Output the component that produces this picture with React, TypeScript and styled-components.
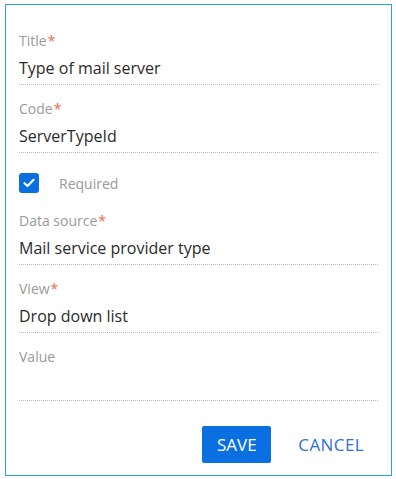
import styled, { createGlobalStyle } from "styled-components";

const GlobalStyle = createGlobalStyle`
  body {
    margin: 0;
    background: #ffffff;
    font-family: "Open Sans", "Noto Sans", sans-serif;
  }
`;

const SCard = styled.div`
  display: flex;
  flex-direction: column;
  margin: 4px 0 0 5px;
  width: 387px;
  height: 472px;
  box-sizing: border-box;
  padding: 25px 13px 0 13px;
  border: 1px solid #22a3dd;
  background: #ffffff;
`;

const SField = styled.div`
  display: flex;
  flex-direction: column;
  border-bottom: 1px dotted #b9b9b9;
  margin-bottom: 13px;
`;

const SLabel = styled.label`
  height: 22px;
  line-height: 22px;
  font-size: 14px;
  color: #9a9a9a;
`;

const SStar = styled.span`
  color: #f2684f;
  margin-left: 1px;
`;

const SValue = styled.div`
  box-sizing: border-box;
  height: 32px;
  padding-top: 2px;
  line-height: 28px;
  font-size: 16px;
  color: #2b2b2b;
  white-space: nowrap;
`;

const SCheckRow = styled.div`
  display: flex;
  align-items: center;
  gap: 20px;
  height: 20px;
  margin: 7px 0 17px;
`;

const SCheckbox = styled.span`
  display: flex;
  align-items: center;
  justify-content: center;
  width: 20px;
  height: 20px;
  border-radius: 3px;
  background: #0a6fe0;
`;

const SCheckText = styled.span`
  font-size: 14px;
  color: #9a9a9a;
`;

const SFooter = styled.div`
  display: flex;
  justify-content: flex-end;
  align-items: center;
  gap: 17px;
  margin-top: 12px;
  padding-right: 4px;
`;

const SSave = styled.button`
  width: 69px;
  height: 37px;
  padding: 0;
  border: none;
  border-radius: 2px;
  background: #0a6fe0;
  color: #ffffff;
  font-family: inherit;
  font-size: 17px;
  cursor: pointer;
`;

const SCancel = styled.button`
  height: 37px;
  padding: 0 10px;
  border: none;
  background: none;
  color: #2f6fd8;
  font-family: inherit;
  font-size: 17px;
  letter-spacing: 0.4px;
  cursor: pointer;
`;

type FieldProps = { label: string; value?: string; required?: boolean };

const Field = ({ label, value, required }: FieldProps) => (
  <SField>
    <SLabel>
      {label}
      {required && <SStar>*</SStar>}
    </SLabel>
    <SValue>{value}</SValue>
  </SField>
);

const App = () => {
  return (
    <>
      <GlobalStyle />
      <SCard>
        <Field label="Title" value="Type of mail server" required />
        <Field label="Code" value="ServerTypeId" required />
        <SCheckRow>
          <SCheckbox>
            <svg width="12" height="10" viewBox="0 0 12 10">
              <path
                d="M1.5 5.2 L4.5 8 L10.5 1.8"
                fill="none"
                stroke="#ffffff"
                strokeWidth="2.2"
                strokeLinecap="round"
                strokeLinejoin="round"
              />
            </svg>
          </SCheckbox>
          <SCheckText>Required</SCheckText>
        </SCheckRow>
        <Field label="Data source" value="Mail service provider type" required />
        <Field label="View" value="Drop down list" required />
        <Field label="Value" />
        <SFooter>
          <SSave>SAVE</SSave>
          <SCancel>CANCEL</SCancel>
        </SFooter>
      </SCard>
    </>
  );
};

export default App;
